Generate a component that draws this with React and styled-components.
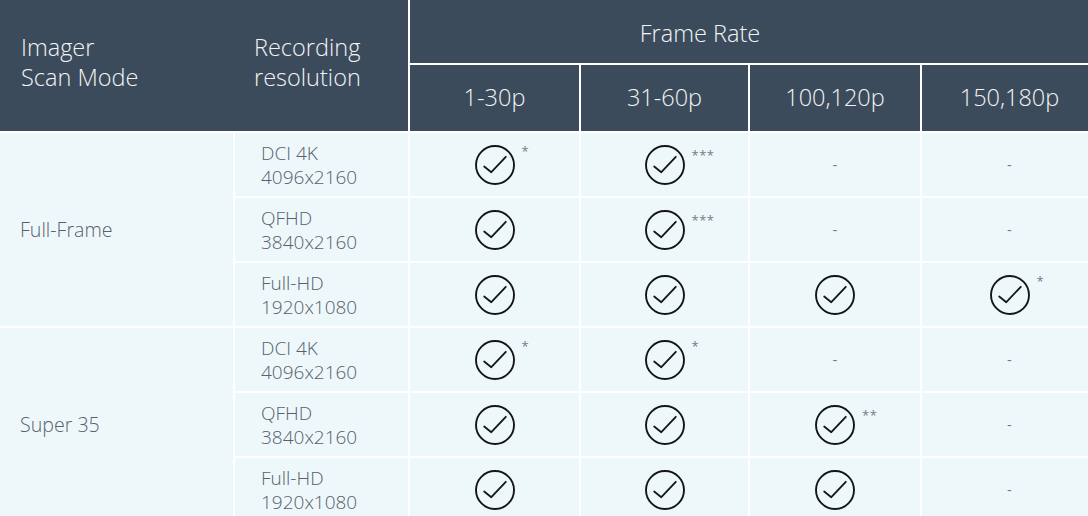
import React from "react";
import styled, { createGlobalStyle } from "styled-components";

const GlobalStyle = createGlobalStyle`
  html, body {
    margin: 0;
    padding: 0;
    overflow: hidden;
    background: #ffffff;
  }
  body {
    font-family: "Open Sans", "Liberation Sans", sans-serif;
  }
`;

const DARK = "#3c4b5b";
const LIGHT = "#eef8fb";
const HEAD_TEXT = "#f1f4f6";
const BODY_TEXT = "#56616b";

const Table = styled.div`
  display: grid;
  width: 1097px;
  grid-template-columns: 233px 173px 169px 167px 170px 175px;
  grid-template-rows: 63px 66px repeat(6, 63px);
  gap: 2px;
  background: #ffffff;
`;

const HeadBlock = styled.div`
  grid-column: 1 / 3;
  grid-row: 1 / 3;
  background: ${DARK};
  display: grid;
  grid-template-columns: 235px 1fr;
  align-items: center;
  padding-bottom: 8px;
`;

const HeadLabel = styled.div`
  color: ${HEAD_TEXT};
  font-weight: 300;
  font-size: 23.5px;
  line-height: 30px;
  padding-left: ${(p) => p.$indent}px;
`;

const GroupHead = styled.div`
  grid-column: 3 / 7;
  grid-row: 1;
  background: ${DARK};
  color: ${HEAD_TEXT};
  font-weight: 300;
  font-size: 23.5px;
  line-height: 30px;
  display: flex;
  align-items: center;
  justify-content: center;
  padding-top: 2px;
  padding-right: 107px;
`;

const SubHead = styled.div`
  background: ${DARK};
  color: ${HEAD_TEXT};
  font-weight: 300;
  font-size: 23.5px;
  line-height: 30px;
  display: flex;
  align-items: center;
  justify-content: center;
  padding-bottom: 3px;
`;

const ModeCell = styled.div`
  grid-column: 1;
  grid-row: ${(p) => p.$row} / span 3;
  background: ${LIGHT};
  color: ${BODY_TEXT};
  font-weight: 300;
  font-size: 19.6px;
  display: flex;
  align-items: center;
  padding-left: 20px;
`;

const ResCell = styled.div`
  background: ${LIGHT};
  color: ${BODY_TEXT};
  font-weight: 300;
  font-size: 19px;
  line-height: 24px;
  display: flex;
  flex-direction: column;
  justify-content: center;
  padding-left: 26px;
`;

const RateCell = styled.div`
  background: ${LIGHT};
  display: flex;
  align-items: center;
  justify-content: center;
`;

const IconWrap = styled.div`
  position: relative;
  width: 40px;
  height: 40px;
  display: flex;
`;

const Note = styled.span`
  position: absolute;
  left: calc(100% + 7px);
  top: ${(p) => (p.$n > 1 ? 4 : 0)}px;
  font-size: 13px;
  line-height: 13px;
  color: #737c85;
  letter-spacing: 0.5px;
  white-space: nowrap;
`;

const Dash = styled.span`
  color: #737c84;
  font-size: 15px;
  font-weight: 400;
  line-height: 15px;
`;

const Check = () => (
  <svg width="40" height="40" viewBox="0 0 40 40" fill="none">
    <circle cx="20" cy="20" r="19" stroke="#151515" strokeWidth="1.9" />
    <path
      d="M9.2 21.5 L16.3 27.2 L30.8 11.8"
      stroke="#151515"
      strokeWidth="1.8"
      strokeLinecap="round"
      strokeLinejoin="round"
    />
  </svg>
);

const rates = ["1-30p", "31-60p", "100,120p", "150,180p"];

const groups = [
  {
    name: "Full-Frame",
    row: 3,
    rows: [
      { res: ["DCI 4K", "4096x2160"], cells: ["*", "***", null, null] },
      { res: ["QFHD", "3840x2160"], cells: ["", "***", null, null] },
      { res: ["Full-HD", "1920x1080"], cells: ["", "", "", "*"] },
    ],
  },
  {
    name: "Super 35",
    row: 6,
    rows: [
      { res: ["DCI 4K", "4096x2160"], cells: ["*", "*", null, null] },
      { res: ["QFHD", "3840x2160"], cells: ["", "", "**", null] },
      { res: ["Full-HD", "1920x1080"], cells: ["", "", "", null] },
    ],
  },
];

export default function App() {
  return (
    <>
      <GlobalStyle />
      <Table>
        <HeadBlock>
          <HeadLabel $indent={21}>
            Imager
            <br />
            Scan Mode
          </HeadLabel>
          <HeadLabel $indent={19}>
            Recording
            <br />
            resolution
          </HeadLabel>
        </HeadBlock>
        <GroupHead>Frame Rate</GroupHead>
        {rates.map((r) => (
          <SubHead key={r}>{r}</SubHead>
        ))}
        {groups.map((g) => (
          <React.Fragment key={g.name}>
            <ModeCell $row={g.row}>{g.name}</ModeCell>
            {g.rows.map((r, i) => (
              <React.Fragment key={i}>
                <ResCell>
                  <span>{r.res[0]}</span>
                  <span>{r.res[1]}</span>
                </ResCell>
                {r.cells.map((c, j) => (
                  <RateCell key={j}>
                    {c === null ? (
                      <Dash>-</Dash>
                    ) : (
                      <IconWrap>
                        <Check />
                        {c && <Note $n={c.length}>{c}</Note>}
                      </IconWrap>
                    )}
                  </RateCell>
                ))}
              </React.Fragment>
            ))}
          </React.Fragment>
        ))}
      </Table>
    </>
  );
}
